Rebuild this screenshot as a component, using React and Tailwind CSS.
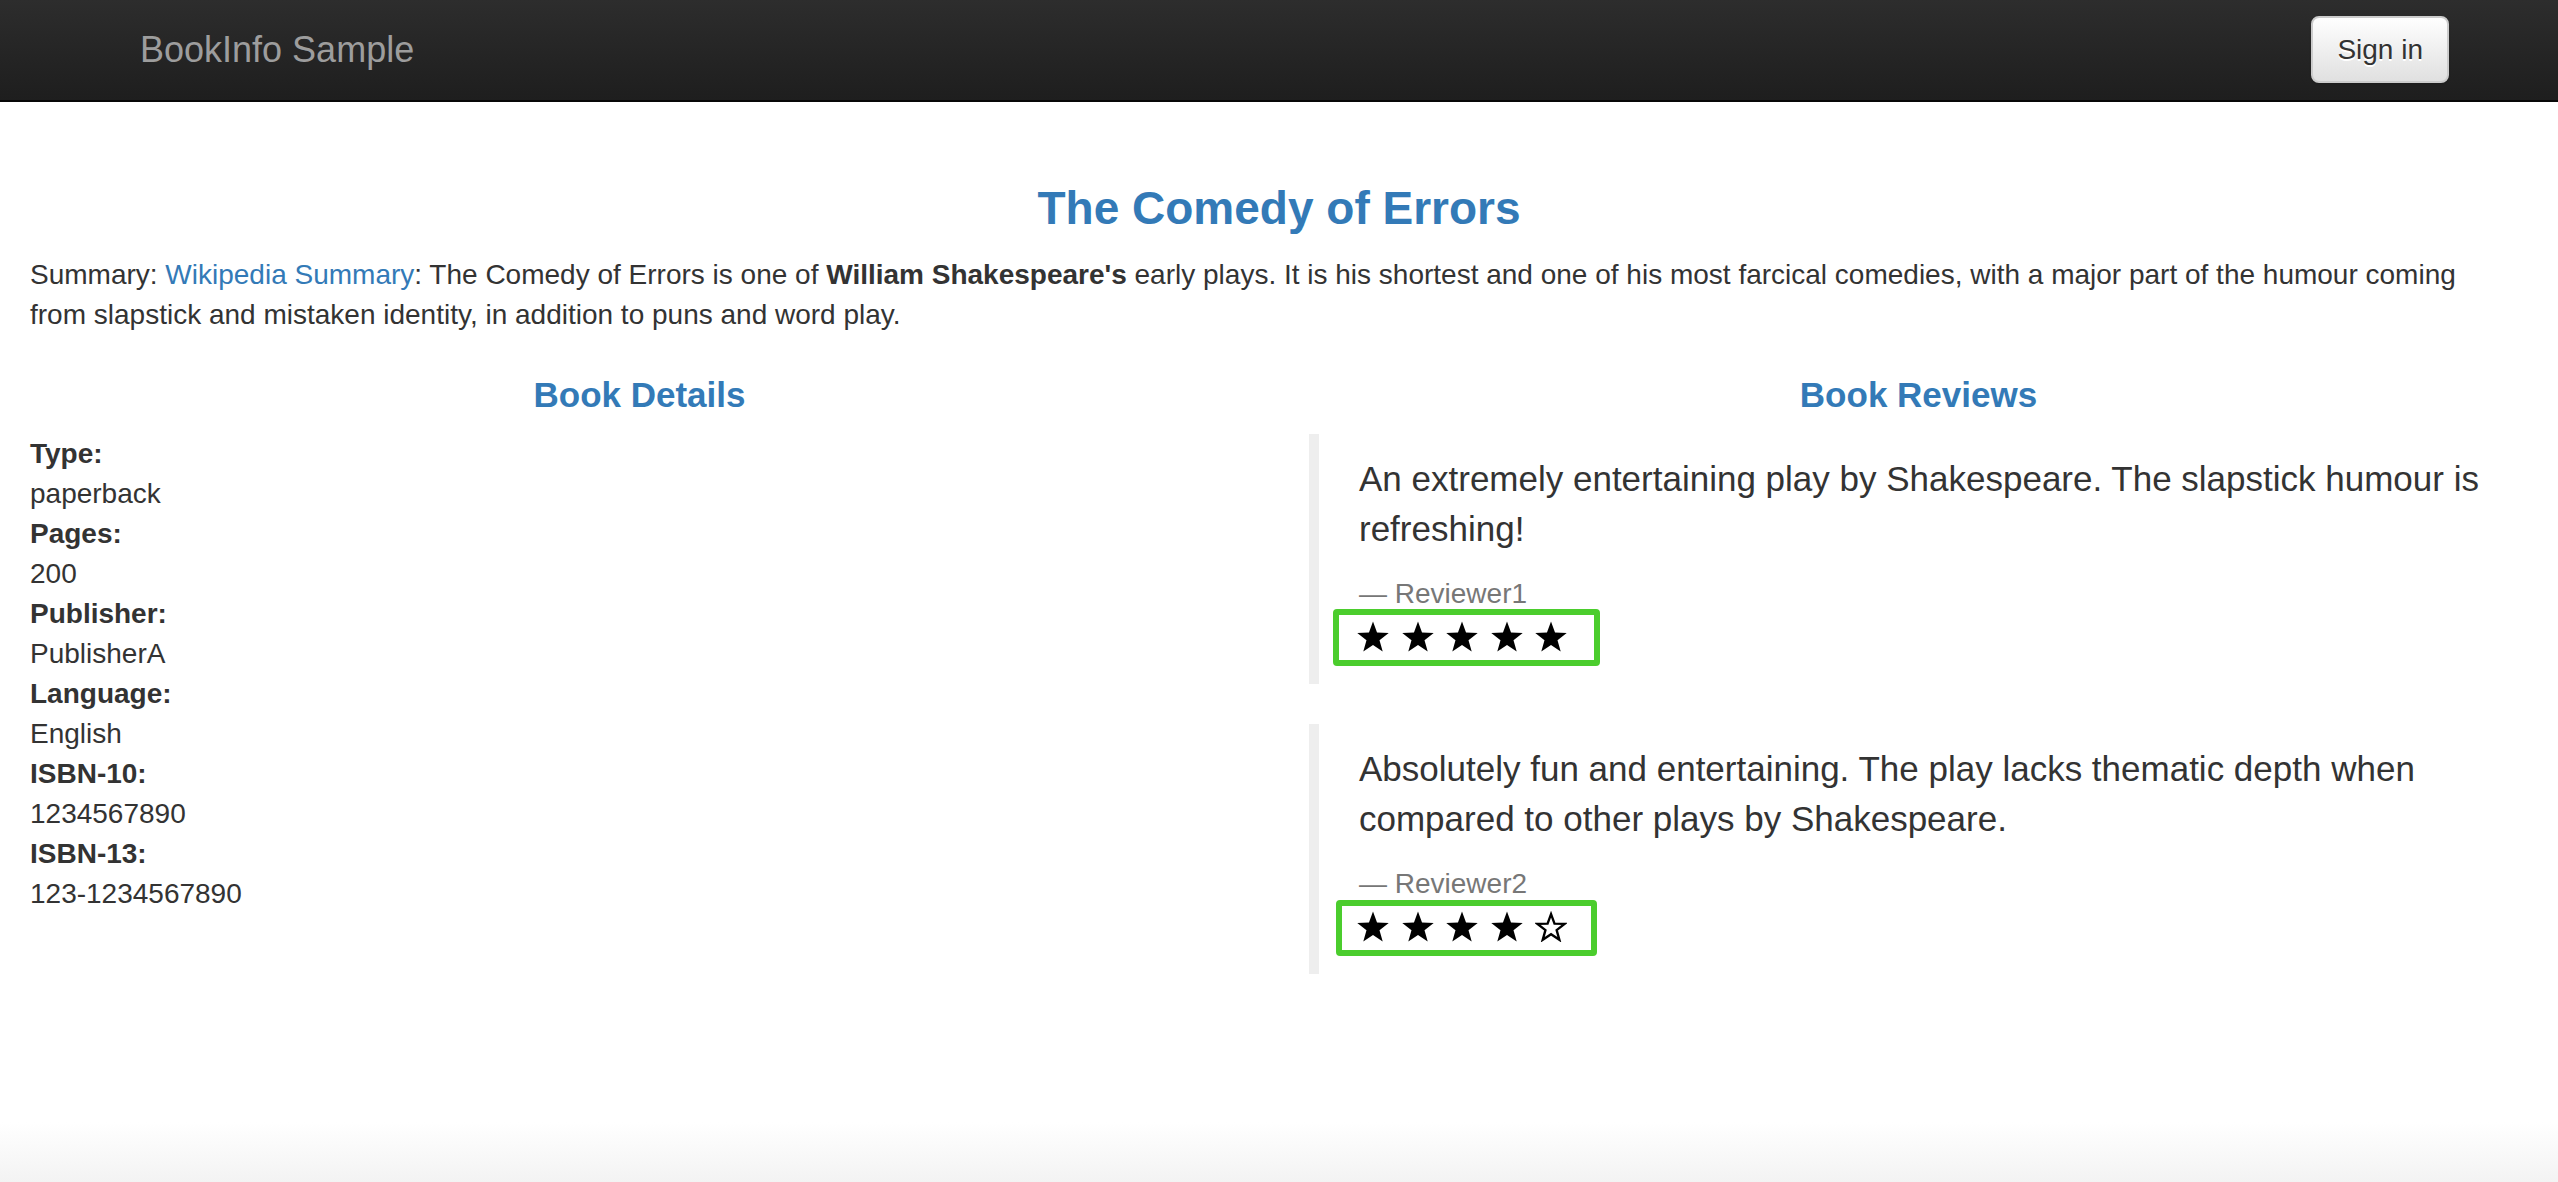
import React from "react";

const details = [
  ["Type:", "paperback"],
  ["Pages:", "200"],
  ["Publisher:", "PublisherA"],
  ["Language:", "English"],
  ["ISBN-10:", "1234567890"],
  ["ISBN-13:", "123-1234567890"],
];

const reviews = [
  {
    text: "An extremely entertaining play by Shakespeare. The slapstick humour is refreshing!",
    reviewer: "Reviewer1",
    stars: 5,
    box: "w-[267px] h-[57px] -ml-[26px] -mt-[5px] -mb-[2px] pl-[18px]",
  },
  {
    text: "Absolutely fun and entertaining. The play lacks thematic depth when compared to other plays by Shakespeare.",
    reviewer: "Reviewer2",
    stars: 4,
    box: "w-[261px] h-[56px] -ml-[23px] -mt-[4px] -mb-[2px] pl-[15px]",
  },
];

const STAR =
  "14,0.5 17.53,10.15 27.79,10.52 19.71,16.85 22.52,26.73 14,21 5.48,26.73 8.29,16.85 0.21,10.52 10.47,10.15";

const Star = ({ filled }) => (
  <svg width="32" height="31" viewBox="0 0 28 27.2">
    {filled ? (
      <polygon points={STAR} fill="#000" />
    ) : (
      <polygon
        points={STAR}
        fill="none"
        stroke="#000"
        strokeWidth="2.4"
        strokeLinejoin="miter"
        transform="translate(2 2.3) scale(0.86)"
      />
    )}
  </svg>
);

const App = () => {
  return (
    <div
      className="h-screen flex flex-col bg-white text-[#333]"
      style={{ fontFamily: '"Liberation Sans", Arial, sans-serif' }}
    >
      {/* navbar */}
      <nav className="h-[102px] shrink-0 border-b-2 border-[#080808] bg-linear-to-b from-[#2d2d2d] to-[#1e1e1e] flex items-start justify-between pl-[140px] pr-[109px]">
        <a className="text-[36px] leading-[40px] text-[#9d9d9d] pt-[30px]">
          BookInfo Sample
        </a>
        <button className="mt-[16px] h-[67px] px-[24px] text-[28px] leading-[40px] text-[#333] border-2 border-[#ccc] rounded-[8px] bg-linear-to-b from-white to-[#e0e0e0] [text-shadow:0_2px_0_#fff] shadow-[0_2px_2px_rgba(0,0,0,0.075)]">
          Sign in
        </button>
      </nav>

      {/* content */}
      <main className="flex-1 pt-[80px]">
        <div className="px-[30px]">
          <h3 className="text-[46px] leading-[53px] font-bold text-center text-[#337ab7] mb-[20px]">
            The Comedy of Errors
          </h3>
          <p className="text-[28px] leading-[40px] mb-[40px] pr-[60px]">
            Summary: <a className="text-[#337ab7]">Wikipedia Summary</a>: The
            Comedy of Errors is one of <b>William Shakespeare's</b> early plays.
            It is his shortest and one of his most farcical comedies, with a
            major part of the humour coming from slapstick and mistaken
            identity, in addition to puns and word play.
          </p>
        </div>

        <div className="grid grid-cols-2">
          <div className="px-[30px]">
            <h4 className="text-[35px] leading-[40px] font-bold text-center text-[#337ab7] mb-[19px]">
              Book Details
            </h4>
            <dl className="text-[28px] leading-[40px]">
              {details.map(([k, v]) => (
                <React.Fragment key={k}>
                  <dt className="font-bold">{k}</dt>
                  <dd>{v}</dd>
                </React.Fragment>
              ))}
            </dl>
          </div>

          <div className="px-[30px]">
            <h4 className="text-[35px] leading-[40px] font-bold text-center text-[#337ab7] mb-[19px]">
              Book Reviews
            </h4>
            {reviews.map((r) => (
              <blockquote
                key={r.reviewer}
                className="border-l-[10px] border-[#eee] py-[20px] px-[40px] mb-[40px]"
              >
                <p className="text-[35px] leading-[50px] mb-[20px]">{r.text}</p>
                <div className="text-[28px] leading-[40px] text-[#777]">
                  — {r.reviewer}
                </div>
                <div
                  className={`flex items-center gap-[12.5px] border-[6px] border-[#4bcd2d] rounded-[4px] bg-white pb-[3px] ${r.box}`}
                >
                  {[0, 1, 2, 3, 4].map((i) => (
                    <Star key={i} filled={i < r.stars} />
                  ))}
                </div>
              </blockquote>
            ))}
          </div>
        </div>
      </main>

      <div className="h-[60px] shrink-0 bg-linear-to-b from-white to-[#f3f3f3]" />
    </div>
  );
};

export default App;
